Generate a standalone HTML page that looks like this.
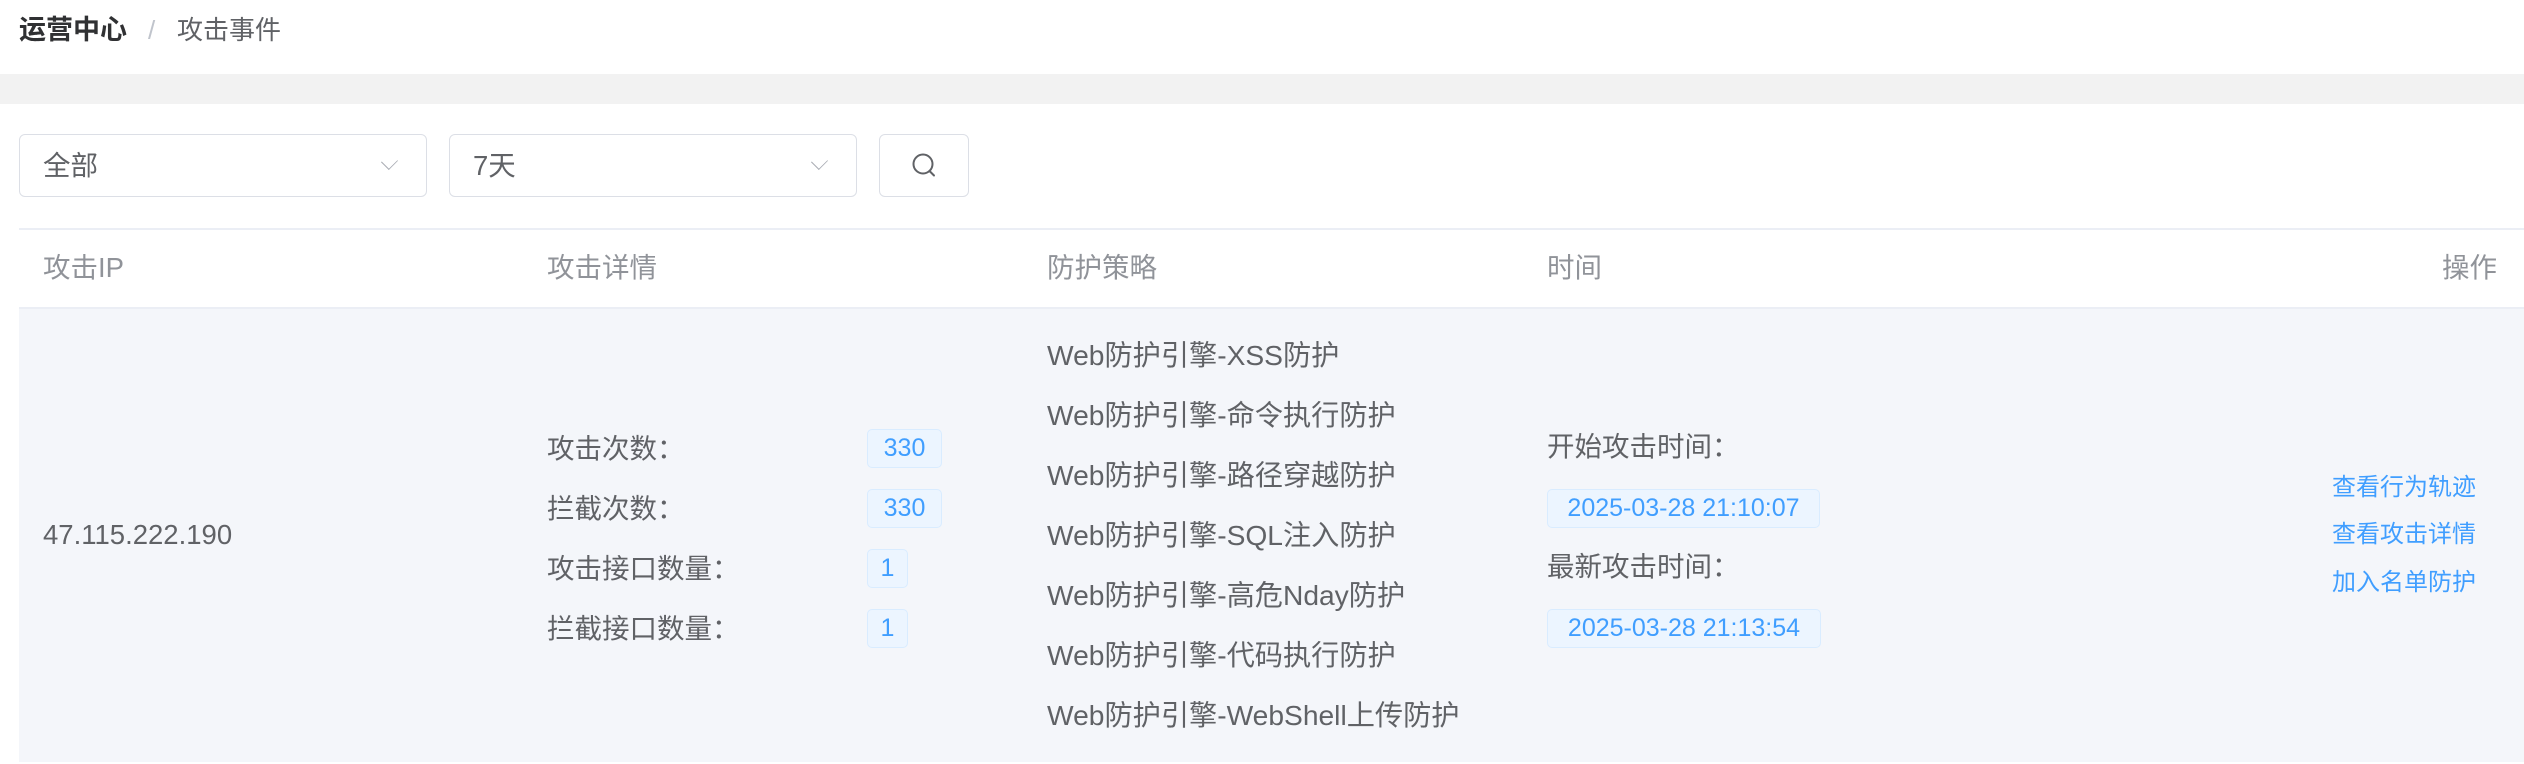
<!DOCTYPE html>
<html><head><meta charset="utf-8"><style>
*{margin:0;padding:0;box-sizing:border-box}
body{width:2524px;height:764px;background:#fff;font-family:"Liberation Sans","Noto Sans CJK SC",sans-serif;color:#606266;position:relative;overflow:hidden;font-size:27.5px}
.a{position:absolute;white-space:nowrap;line-height:1}
.band{position:absolute;left:0;top:74px;width:2524px;height:30px;background:#f2f2f2}
.sel{position:absolute;top:134px;height:63px;border:1.5px solid #dcdfe6;border-radius:6px;background:#fff}
.chev{position:absolute;top:20px;width:13px;height:13px;border-right:1.4px solid #a8abb2;border-bottom:1.4px solid #a8abb2;transform:rotate(45deg) scale(.85,1)}
.hline{position:absolute;left:19px;width:2505px;height:2px;background:#ebeef5}
.row{position:absolute;left:19px;top:309px;width:2505px;height:453px;background:#f4f6fa}
.th{color:#909399;top:254px}
.bd{position:absolute;height:39px;background:#ecf5ff;border:1.5px solid #d9ecff;border-radius:5px;color:#409eff;font-size:25px;line-height:36px;text-align:center}
.lk{color:#409eff;font-size:24px}
.p{font-size:28.2px}
</style></head><body>
<div class="a" style="left:19px;top:17px;color:#303133;font-weight:bold;font-size:27px">运营中心</div>
<div class="a" style="left:148px;top:17px;color:#c0c4cc;font-size:26px">/</div>
<div class="a" style="left:177px;top:17px;color:#606266;font-size:26px">攻击事件</div>
<div class="band"></div>
<div class="sel" style="left:19px;width:408px"><div class="a" style="left:23px;top:17px">全部</div><div class="chev" style="left:363px"></div></div>
<div class="sel" style="left:449px;width:408px"><div class="a" style="left:23px;top:17px">7天</div><div class="chev" style="left:363px"></div></div>
<div class="sel" style="left:879px;width:90px">
<svg style="position:absolute;left:29px;top:16px" width="30" height="30" viewBox="0 0 30 30"><circle cx="14" cy="13" r="9.5" fill="none" stroke="#606266" stroke-width="2"/><path d="M20.5 20l4.5 4.5" stroke="#606266" stroke-width="2" stroke-linecap="round"/></svg></div>
<div class="hline" style="top:228px"></div>
<div class="a th" style="left:43px">攻击IP</div>
<div class="a th" style="left:547px">攻击详情</div>
<div class="a th" style="left:1047px">防护策略</div>
<div class="a th" style="left:1547px">时间</div>
<div class="a th" style="left:2442px">操作</div>
<div class="hline" style="top:307px"></div>
<div class="row"></div>
<div class="a" style="left:43px;top:521px">47.115.222.190</div>
<div class="a" style="left:547px;top:435px">攻击次数：</div>
<div class="a" style="left:547px;top:495px">拦截次数：</div>
<div class="a" style="left:547px;top:555px">攻击接口数量：</div>
<div class="a" style="left:547px;top:615px">拦截接口数量：</div>
<div class="bd" style="left:867px;top:429px;width:75px">330</div>
<div class="bd" style="left:867px;top:489px;width:75px">330</div>
<div class="bd" style="left:867px;top:549px;width:41px">1</div>
<div class="bd" style="left:867px;top:609px;width:41px">1</div>
<div class="a p" style="left:1047px;top:341px">Web防护引擎-XSS防护</div>
<div class="a p" style="left:1047px;top:401px">Web防护引擎-命令执行防护</div>
<div class="a p" style="left:1047px;top:461px">Web防护引擎-路径穿越防护</div>
<div class="a p" style="left:1047px;top:521px">Web防护引擎-SQL注入防护</div>
<div class="a p" style="left:1047px;top:581px">Web防护引擎-高危Nday防护</div>
<div class="a p" style="left:1047px;top:641px">Web防护引擎-代码执行防护</div>
<div class="a p" style="left:1047px;top:701px">Web防护引擎-WebShell上传防护</div>
<div class="a" style="left:1547px;top:433px">开始攻击时间：</div>
<div class="bd" style="left:1547px;top:489px;width:273px">2025-03-28 21:10:07</div>
<div class="a" style="left:1547px;top:553px">最新攻击时间：</div>
<div class="bd" style="left:1547px;top:609px;width:274px">2025-03-28 21:13:54</div>
<div class="a lk" style="left:2332px;top:476px">查看行为轨迹</div>
<div class="a lk" style="left:2332px;top:523px">查看攻击详情</div>
<div class="a lk" style="left:2332px;top:571px">加入名单防护</div>
</body></html>
